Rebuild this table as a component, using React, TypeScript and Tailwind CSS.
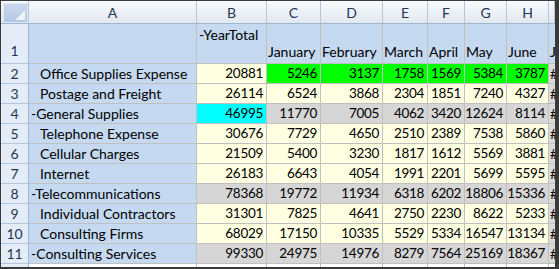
const rows = [
  { label: "Office Supplies Expense", sub: true, vals: [20881, 5246, 3137, 1758, 1569, 5384, 3787], b: "bg-[#ffffe1]", rest: "bg-[#00ff00]" },
  { label: "Postage and Freight", sub: true, vals: [26114, 6524, 3868, 2304, 1851, 7240, 4327], b: "bg-[#ffffe1]", rest: "bg-[#ffffe1]" },
  { label: "-General Supplies", sub: false, vals: [46995, 11770, 7005, 4062, 3420, 12624, 8114], b: "bg-[#00ffff]", rest: "bg-[#d6d6d6]" },
  { label: "Telephone Expense", sub: true, vals: [30676, 7729, 4650, 2510, 2389, 7538, 5860], b: "bg-[#ffffe1]", rest: "bg-[#ffffe1]" },
  { label: "Cellular Charges", sub: true, vals: [21509, 5400, 3230, 1817, 1612, 5569, 3881], b: "bg-[#ffffe1]", rest: "bg-[#ffffe1]" },
  { label: "Internet", sub: true, vals: [26183, 6643, 4054, 1991, 2201, 5699, 5595], b: "bg-[#ffffe1]", rest: "bg-[#ffffe1]" },
  { label: "-Telecommunications", sub: false, vals: [78368, 19772, 11934, 6318, 6202, 18806, 15336], b: "bg-[#d6d6d6]", rest: "bg-[#d6d6d6]" },
  { label: "Individual Contractors", sub: true, vals: [31301, 7825, 4641, 2750, 2230, 8622, 5233], b: "bg-[#ffffe1]", rest: "bg-[#ffffe1]" },
  { label: "Consulting Firms", sub: true, vals: [68029, 17150, 10335, 5529, 5334, 16547, 13134], b: "bg-[#ffffe1]", rest: "bg-[#ffffe1]" },
  { label: "-Consulting Services", sub: false, vals: [99330, 24975, 14976, 8279, 7564, 25169, 18367], b: "bg-[#d6d6d6]", rest: "bg-[#d6d6d6]" },
]

const letters = ["A", "B", "C", "D", "E", "F", "G", "H", ""]
const months = ["January", "February", "March", "April", "May", "June"]

const hdr = "border-r border-b border-r-[#b5c5da] border-b-[#9eb6ce] bg-gradient-to-b from-[#f8fafd] to-[#e2e8f0] text-[#1f3656]"
const rowHdr = "border-r border-b border-r-[#9eb6ce] border-b-[#b5c5da] bg-[#e4ecf7] text-[#1f3656] flex items-center justify-center"
const cell = "border-r border-b border-[#c0c0c0] flex items-center overflow-hidden whitespace-nowrap"

export default function App() {
  return (
    <div className="w-[559px] h-[269px] overflow-hidden bg-white border-t border-l border-b-2 border-r-4 border-[#3a3a3a] text-black text-[14px] [font-family:Lato,'Open_Sans',sans-serif]">
      <div className="grid h-full grid-cols-[28px_168px_70px_54px_62px_45px_37px_42px_42px_1fr] grid-rows-[23px_40px_repeat(10,20px)_1fr]">
        {/* header row */}
        <div className={`${hdr} p-[2px_0_0_2px]`}>
          <div className="h-full w-full bg-gradient-to-b from-[#c9d8ee] to-[#b3c7e3] border border-[#dfe8f4] flex items-end justify-end p-[2px]">
            <svg width="10" height="10" viewBox="0 0 10 10">
              <polygon points="10,0 10,10 0,10" fill="#eef3f9" />
            </svg>
          </div>
        </div>
        {letters.map((l, i) => (
          <div key={l + i} className={`${hdr} flex items-center justify-center`}>
            {l}
          </div>
        ))}
        {/* row 1 */}
        <div className={`${rowHdr} !items-end pb-[2px]`}>1</div>
        <div className="border-r border-b border-[#c0c0c0] bg-[#c5d9f1]" />
        <div className="border-r border-b border-[#c0c0c0] bg-[#c5d9f1] pl-[2px] whitespace-nowrap">-YearTotal</div>
        {months.map((m) => (
          <div key={m} className="border-r border-b border-[#c0c0c0] bg-[#c5d9f1] flex items-end pl-[1px] pb-[1px] whitespace-nowrap overflow-visible">
            {m}
          </div>
        ))}
        <div className="border-b border-[#c0c0c0] bg-[#c5d9f1] flex items-end pl-[1px] pb-[1px] whitespace-nowrap overflow-hidden">July</div>
        {/* data rows */}
        {rows.map((r, i) => (
          <div key={r.label} className="contents">
            <div className={rowHdr}>{i + 2}</div>
            <div className={`${cell} bg-[#c5d9f1] ${r.sub ? "pl-[11px]" : "pl-[2px]"}`}>{r.label}</div>
            {r.vals.map((v, j) => (
              <div key={j} className={`${cell} justify-end pr-[3px] text-[13.5px] tracking-[-0.3px] ${j === 0 ? r.b : r.rest}`}>
                {v}
              </div>
            ))}
            <div className="border-b border-[#c0c0c0] bg-[#dadada] flex items-center pl-[1px] overflow-hidden">#</div>
          </div>
        ))}
        {/* partial row 12 */}
        <div className="border-r border-[#9eb6ce] bg-[#e4ecf7]" />
        {letters.map((l, i) => (
          <div key={"r12" + i} className={i < 8 ? "border-r border-[#c0c0c0] bg-white" : "bg-white"} />
        ))}
      </div>
    </div>
  )
}
